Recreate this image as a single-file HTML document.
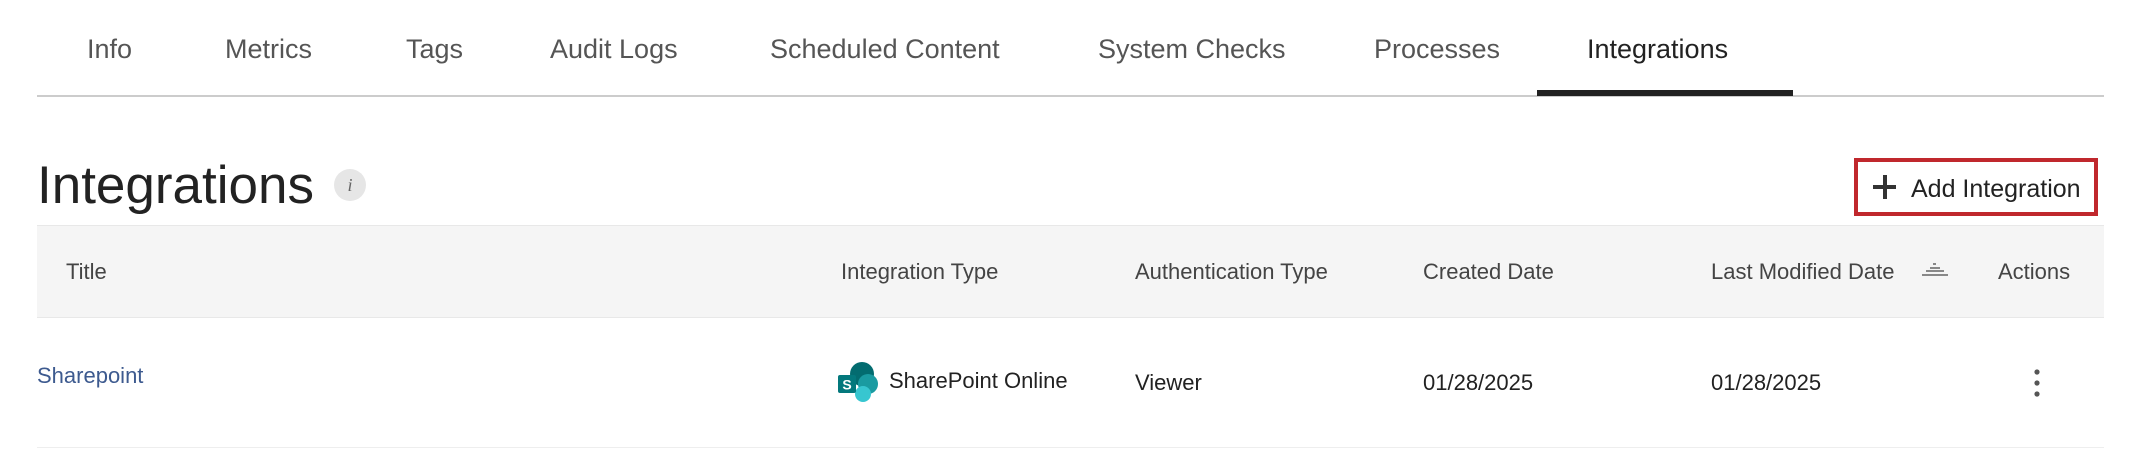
<!DOCTYPE html>
<html><head><meta charset="utf-8"><style>
body{margin:0;width:2144px;height:452px;background:#fff;position:relative;overflow:hidden;font-family:"Liberation Sans",sans-serif}
.a{position:absolute;white-space:nowrap}
.tab{font-size:27px;color:#555;top:34px}
.th{font-size:22px;color:#444;top:259px}
.td{font-size:22px;color:#222;top:370px}
</style></head><body>
<div class="a tab" style="left:87px">Info</div>
<div class="a tab" style="left:225px">Metrics</div>
<div class="a tab" style="left:406px">Tags</div>
<div class="a tab" style="left:550px">Audit Logs</div>
<div class="a tab" style="left:770px">Scheduled Content</div>
<div class="a tab" style="left:1098px">System Checks</div>
<div class="a tab" style="left:1374px">Processes</div>
<div class="a tab" style="left:1587px;color:#222">Integrations</div>
<div class="a" style="left:37px;top:95px;width:2067px;height:2px;background:#ccc"></div>
<div class="a" style="left:1537px;top:90px;width:256px;height:6px;background:#222"></div>

<div class="a" style="left:37px;top:155px;font-size:53px;color:#222">Integrations</div>
<div class="a" style="left:334px;top:169px;width:32px;height:32px;border-radius:50%;background:#e6e6e6;color:#666;font:italic 18px 'Liberation Serif',serif;text-align:center;line-height:32px">i</div>

<div class="a" style="left:1854px;top:158px;width:236px;height:50px;border:4px solid #c0282d"></div>
<div class="a" style="left:1873px;top:185px;width:23px;height:4px;background:#333"></div>
<div class="a" style="left:1883px;top:175px;width:4px;height:24px;background:#333"></div>
<div class="a" style="left:1911px;top:175px;font-size:25px;color:#222">Add Integration</div>

<div class="a" style="left:37px;top:225px;width:2067px;height:91px;background:#f5f5f5;border-top:1px solid #e8e8e8;border-bottom:1px solid #e8e8e8"></div>
<div class="a th" style="left:66px">Title</div>
<div class="a th" style="left:841px">Integration Type</div>
<div class="a th" style="left:1135px">Authentication Type</div>
<div class="a th" style="left:1423px">Created Date</div>
<div class="a th" style="left:1711px">Last Modified Date</div>
<svg class="a" style="left:1920px;top:260px" width="30" height="20"><g fill="#888"><rect x="13" y="3" width="3" height="2"/><rect x="10" y="7" width="10" height="2"/><rect x="6" y="10" width="18" height="2"/><rect x="2" y="14" width="26" height="2"/></g></svg>
<div class="a th" style="left:1998px">Actions</div>

<div class="a" style="left:37px;top:363px;font-size:22px;color:#3d5a8f">Sharepoint</div>
<svg class="a" style="left:836px;top:362px" width="44" height="42"><circle cx="26" cy="12" r="12" fill="#036c70"/><circle cx="32" cy="22" r="10" fill="#1a9ba1"/><circle cx="27" cy="32" r="8" fill="#37c6d0"/><rect x="2" y="13" width="18" height="18" rx="2" fill="#03787c"/><text x="11" y="27.5" font-family="Liberation Sans" font-weight="bold" font-size="14" fill="#fff" text-anchor="middle">S</text></svg>
<div class="a td" style="left:889px;top:368px">SharePoint Online</div>
<div class="a td" style="left:1135px">Viewer</div>
<div class="a td" style="left:1423px">01/28/2025</div>
<div class="a td" style="left:1711px">01/28/2025</div>
<svg class="a" style="left:2031px;top:368px" width="12" height="30"><g fill="#555"><circle cx="6" cy="4" r="2.6"/><circle cx="6" cy="15" r="2.6"/><circle cx="6" cy="26" r="2.6"/></g></svg>
<div class="a" style="left:37px;top:447px;width:2067px;height:1px;background:#eee"></div>
</body></html>
